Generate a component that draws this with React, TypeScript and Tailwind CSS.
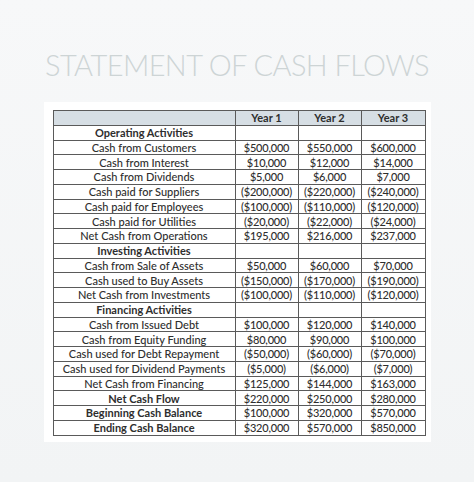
const rows: { label: string; bold?: boolean; v?: [string, string, string] }[] = [
  { label: 'Operating Activities', bold: true },
  { label: 'Cash from Customers', v: ['$500,000', '$550,000', '$600,000'] },
  { label: 'Cash from Interest', v: ['$10,000', '$12,000', '$14,000'] },
  { label: 'Cash from Dividends', v: ['$5,000', '$6,000', '$7,000'] },
  { label: 'Cash paid for Suppliers', v: ['($200,000)', '($220,000)', '($240,000)'] },
  { label: 'Cash paid for Employees', v: ['($100,000)', '($110,000)', '($120,000)'] },
  { label: 'Cash paid for Utilities', v: ['($20,000)', '($22,000)', '($24,000)'] },
  { label: 'Net Cash from Operations', v: ['$195,000', '$216,000', '$237,000'] },
  { label: 'Investing Activities', bold: true },
  { label: 'Cash from Sale of Assets', v: ['$50,000', '$60,000', '$70,000'] },
  { label: 'Cash used to Buy Assets', v: ['($150,000)', '($170,000)', '($190,000)'] },
  { label: 'Net Cash from Investments', v: ['($100,000)', '($110,000)', '($120,000)'] },
  { label: 'Financing Activities', bold: true },
  { label: 'Cash from Issued Debt', v: ['$100,000', '$120,000', '$140,000'] },
  { label: 'Cash from Equity Funding', v: ['$80,000', '$90,000', '$100,000'] },
  { label: 'Cash used for Debt Repayment', v: ['($50,000)', '($60,000)', '($70,000)'] },
  { label: 'Cash used for Dividend Payments', v: ['($5,000)', '($6,000)', '($7,000)'] },
  { label: 'Net Cash from Financing', v: ['$125,000', '$144,000', '$163,000'] },
  { label: 'Net Cash Flow', bold: true, v: ['$220,000', '$250,000', '$280,000'] },
  { label: 'Beginning Cash Balance', bold: true, v: ['$100,000', '$320,000', '$570,000'] },
  { label: 'Ending Cash Balance', bold: true, v: ['$320,000', '$570,000', '$850,000'] },
]

export default function App() {
  return (
    <div className="flex h-[482px] w-[474px] flex-col items-center bg-gradient-to-b from-[#f7f8f9] to-[#f2f4f5] font-['Lato',sans-serif]">
      <h1 className="mt-[47px] text-[29px] font-light leading-[36px] tracking-[-0.6px] text-[#cdd4d5]">
        STATEMENT OF CASH FLOWS
      </h1>

      <div className="mt-[19px] w-[387px] bg-white pt-[8px] pr-[6px] pb-[6px] pl-[9px]">
        <table className="w-[372px] table-fixed border-collapse text-[11px] font-medium leading-none text-[#2e2e2e]">
          <colgroup>
            <col className="w-[182px]" />
            <col className="w-[63px]" />
            <col className="w-[63px]" />
            <col className="w-[64px]" />
          </colgroup>
          <thead>
            <tr className="h-[14.75px] bg-[#d6dee4] font-bold">
              <th className="border border-[#5a5a5a]" />
              <th className="border border-[#5a5a5a]">Year 1</th>
              <th className="border border-[#5a5a5a]">Year 2</th>
              <th className="border border-[#5a5a5a]">Year 3</th>
            </tr>
          </thead>
          <tbody>
            {rows.map((r) => (
              <tr key={r.label} className="h-[14.75px] text-center">
                <td className={`border border-[#5a5a5a] ${r.bold ? 'font-bold' : ''}`}>{r.label}</td>
                <td className="border border-[#5a5a5a] tracking-[-0.2px]">{r.v?.[0]}</td>
                <td className="border border-[#5a5a5a] tracking-[-0.2px]">{r.v?.[1]}</td>
                <td className="border border-[#5a5a5a] tracking-[-0.2px]">{r.v?.[2]}</td>
              </tr>
            ))}
          </tbody>
        </table>
      </div>
    </div>
  )
}
